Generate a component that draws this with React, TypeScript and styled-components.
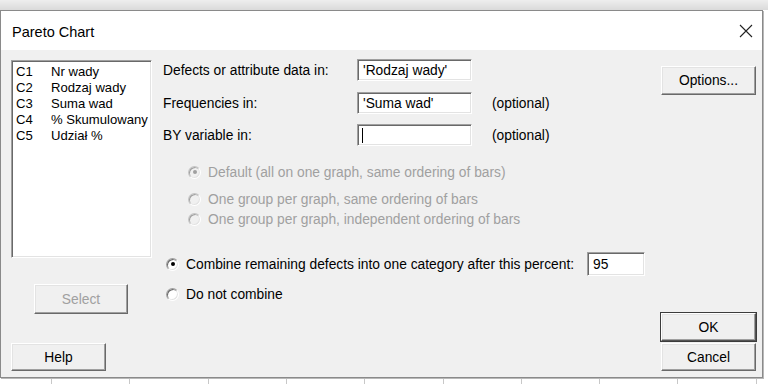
import React from "react";
import styled, { createGlobalStyle, css } from "styled-components";

const GlobalStyle = createGlobalStyle`
  html, body {
    margin: 0;
    padding: 0;
    background: #ffffff;
  }
  body {
    font-family: "Liberation Sans", Arial, sans-serif;
    font-size: 13.8px;
    color: #000;
  }
`;

const Screen = styled.div`
  width: 768px;
  height: 384px;
  overflow: hidden;
  display: flex;
  flex-direction: column;
  background-color: #ffffff;
  background-image: repeating-linear-gradient(
    to right,
    transparent 0,
    transparent 51px,
    #c8c8c8 51px,
    #c8c8c8 52px,
    transparent 52px,
    transparent 78.3px
  );
`;

const TopStrip = styled.div`
  height: 10px;
  flex: none;
  background: linear-gradient(to bottom, #eeeeee, #dadada);
`;

const Window = styled.div`
  width: 761px;
  height: 366px;
  flex: none;
  border: 1px solid #8a8a8a;
  background: #f0f0f0;
  display: flex;
  flex-direction: column;
  box-shadow: 1px 1px 0 #b8b8b8;
`;

const TitleBar = styled.div`
  height: 39px;
  flex: none;
  background: #ffffff;
  display: flex;
  align-items: center;
  justify-content: space-between;
  padding: 0 9px 0 11px;
`;

const Title = styled.span`
  font-size: 14.5px;
  margin-top: 2px;
`;

const CloseIcon = () => (
  <svg width="14" height="14" viewBox="0 0 14 14" style={{ marginTop: 1 }}>
    <path d="M1 1 L13 13 M13 1 L1 13" stroke="#222" strokeWidth="1.1" fill="none" />
  </svg>
);

const Body = styled.div`
  flex: 1;
  display: flex;
  padding: 10px 6px 6px 10px;
`;

const LeftCol = styled.div`
  width: 141px;
  display: flex;
  flex-direction: column;
`;

const sunken = css`
  background: #ffffff;
  border: 1px solid;
  border-color: #a0a0a0 #ffffff #ffffff #a0a0a0;
  box-shadow: inset 1px 1px 0 #696969, inset -1px -1px 0 #e3e3e3;
  box-sizing: border-box;
`;

const ListBox = styled.div`
  ${sunken};
  height: 198px;
  padding: 3px 0 0 4px;
  display: flex;
  flex-direction: column;
  font-size: 13.1px;
  overflow: hidden;
`;

const ListItem = styled.div`
  display: flex;
  height: 16px;
  line-height: 16px;
  white-space: nowrap;
`;

const ColId = styled.span`
  width: 35px;
  flex: none;
`;

const Button = styled.div<{ $width?: number; $height?: number; $disabled?: boolean; $default?: boolean }>`
  width: ${(p) => p.$width ?? 95}px;
  height: ${(p) => p.$height ?? 28}px;
  box-sizing: border-box;
  display: flex;
  align-items: center;
  justify-content: center;
  background: #f0f0f0;
  color: ${(p) => (p.$disabled ? "#a0a0a0" : "#000")};
  border: 1px solid;
  border-color: #ffffff #696969 #696969 #ffffff;
  box-shadow: inset -1px -1px 0 #a0a0a0, inset 1px 1px 0 #e3e3e3;
  ${(p) =>
    p.$default &&
    css`
      outline: 1px solid #3c3c3c;
      outline-offset: 0;
      border-color: #ffffff #555 #555 #ffffff;
    `}
`;

const SelectWrap = styled.div`
  margin: 26px 0 0 23px;
`;

const HelpWrap = styled.div`
  margin-top: auto;
`;

const MiddleCol = styled.div`
  flex: 1;
  margin-left: 11px;
  display: flex;
  flex-direction: column;
  margin-top: -1px;
`;

const FieldRow = styled.div<{ $gap?: number }>`
  display: flex;
  align-items: center;
  height: 22px;
  margin-top: ${(p) => p.$gap ?? 0}px;
`;

const FieldLabel = styled.span`
  width: 194px;
`;

const TextField = styled.div<{ $width?: number; $height?: number }>`
  ${sunken};
  width: ${(p) => p.$width ?? 115}px;
  height: ${(p) => p.$height ?? 22}px;
  padding: 0 0 0 5px;
  display: flex;
  align-items: center;
  white-space: nowrap;
  overflow: hidden;
`;

const Caret = styled.span`
  width: 1px;
  height: 15px;
  background: #000;
  margin-left: -1px;
`;

const Hint = styled.span`
  margin-left: 20px;
`;

const RadioRow = styled.div<{ $gap?: number; $indent?: number; $disabled?: boolean; $height?: number }>`
  display: flex;
  align-items: center;
  height: ${(p) => p.$height ?? 20}px;
  margin-top: ${(p) => p.$gap ?? 0}px;
  padding-left: ${(p) => p.$indent ?? 0}px;
  color: ${(p) => (p.$disabled ? "#a0a0a0" : "#000")};
  white-space: nowrap;
`;

const RadioCircle = styled.span<{ $checked?: boolean; $disabled?: boolean }>`
  width: 13px;
  height: 13px;
  box-sizing: border-box;
  border-radius: 50%;
  border: 1px solid;
  border-color: ${(p) => (p.$disabled ? "#c4c4c4" : "#a0a0a0")} #ffffff #ffffff
    ${(p) => (p.$disabled ? "#c4c4c4" : "#a0a0a0")};
  box-shadow: inset 1px 1px 0 ${(p) => (p.$disabled ? "#a0a0a0" : "#696969")},
    inset -1px -1px 0 #e3e3e3;
  background: ${(p) => (p.$disabled ? "#f0f0f0" : "#ffffff")};
  display: flex;
  align-items: center;
  justify-content: center;
  margin-right: 7px;
  flex: none;
  &::after {
    content: "";
    display: ${(p) => (p.$checked ? "block" : "none")};
    width: 4px;
    height: 4px;
    border-radius: 50%;
    background: ${(p) => (p.$disabled ? "#a0a0a0" : "#000")};
  }
`;

const PercentField = styled(TextField)`
  margin-left: 13px;
  color: #000;
`;

const RightCol = styled.div`
  width: 95px;
  margin-left: 8px;
  display: flex;
  flex-direction: column;
  padding-top: 6px;
`;

const BottomButtons = styled.div`
  margin-top: auto;
  display: flex;
  flex-direction: column;
  gap: 2px;
`;

const columns = [
  ["C1", "Nr wady"],
  ["C2", "Rodzaj wady"],
  ["C3", "Suma wad"],
  ["C4", "% Skumulowany"],
  ["C5", "Udział %"],
];

export default function App() {
  return (
    <>
      <GlobalStyle />
      <Screen>
        <TopStrip />
        <Window>
          <TitleBar>
            <Title>Pareto Chart</Title>
            <CloseIcon />
          </TitleBar>
          <Body>
            <LeftCol>
              <ListBox>
                {columns.map(([id, name]) => (
                  <ListItem key={id}>
                    <ColId>{id}</ColId>
                    <span>{name}</span>
                  </ListItem>
                ))}
              </ListBox>
              <SelectWrap>
                <Button $width={94} $height={30} $disabled>
                  Select
                </Button>
              </SelectWrap>
              <HelpWrap>
                <Button>Help</Button>
              </HelpWrap>
            </LeftCol>

            <MiddleCol>
              <FieldRow>
                <FieldLabel>Defects or attribute data in:</FieldLabel>
                <TextField>'Rodzaj wady'</TextField>
              </FieldRow>
              <FieldRow $gap={11}>
                <FieldLabel>Frequencies in:</FieldLabel>
                <TextField>'Suma wad'</TextField>
                <Hint>(optional)</Hint>
              </FieldRow>
              <FieldRow $gap={10}>
                <FieldLabel>BY variable in:</FieldLabel>
                <TextField>
                  <Caret />
                </TextField>
                <Hint>(optional)</Hint>
              </FieldRow>

              <RadioRow $gap={16} $indent={25} $disabled>
                <RadioCircle $checked $disabled />
                Default (all on one graph, same ordering of bars)
              </RadioRow>
              <RadioRow $gap={7} $indent={25} $disabled>
                <RadioCircle $disabled />
                One group per graph, same ordering of bars
              </RadioRow>
              <RadioRow $indent={25} $disabled>
                <RadioCircle $disabled />
                One group per graph, independent ordering of bars
              </RadioRow>

              <RadioRow $gap={23} $indent={3} $height={24}>
                <RadioCircle $checked />
                Combine remaining defects into one category after this percent:
                <PercentField $width={58} $height={24}>
                  95
                </PercentField>
              </RadioRow>
              <RadioRow $gap={8} $indent={3}>
                <RadioCircle />
                Do not combine
              </RadioRow>
            </MiddleCol>

            <RightCol>
              <Button $height={29}>Options...</Button>
              <BottomButtons>
                <Button $default>OK</Button>
                <Button>Cancel</Button>
              </BottomButtons>
            </RightCol>
          </Body>
        </Window>
      </Screen>
    </>
  );
}
